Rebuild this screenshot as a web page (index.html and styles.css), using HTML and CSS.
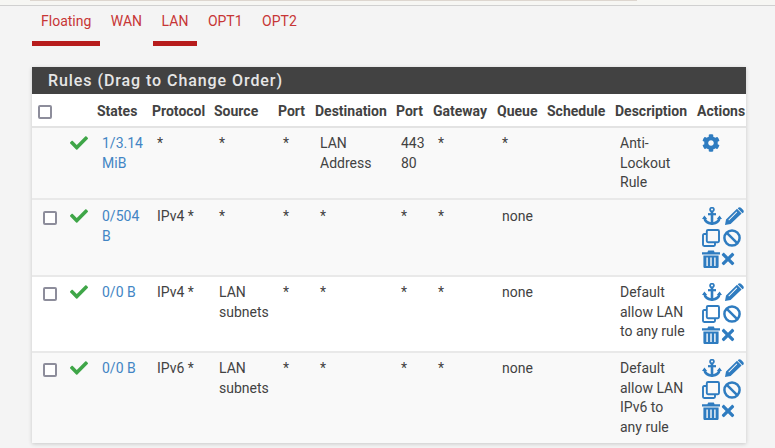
FILE: index.html
```html
<!DOCTYPE html>
<html lang="en">
<head>
<meta charset="utf-8">
<title>Firewall Rules</title>
<link rel="stylesheet" href="styles.css">
</head>
<body>
<svg class="defs" width="0" height="0" aria-hidden="true">
  <symbol id="i-check" viewBox="0 0 512 512"><path d="M173.9 439.4l-166.4-166.4c-10-10-10-26.2 0-36.2l36.2-36.2c10-10 26.2-10 36.2 0L192 312.7 432.1 72.6c10-10 26.2-10 36.2 0l36.2 36.2c10 10 10 26.2 0 36.2l-294.4 294.4c-10 10-26.2 10-36.2 0z"/></symbol>
  <symbol id="i-cog" viewBox="0 0 512 512"><path d="M487.4 315.7l-42.6-24.6c4.3-23.2 4.3-47 0-70.2l42.6-24.6c4.9-2.8 7.1-8.6 5.5-14-11.1-35.6-30-67.8-54.7-94.6-3.8-4.1-10-5.1-14.8-2.3L380.8 110c-17.9-15.4-38.5-27.3-60.8-35.1V25.8c0-5.6-3.9-10.5-9.4-11.7-36.7-8.2-74.3-7.8-109.2 0-5.5 1.2-9.4 6.1-9.4 11.7V75c-22.2 7.9-42.8 19.8-60.8 35.1L88.7 85.5c-4.9-2.8-11-1.9-14.8 2.3-24.7 26.7-43.6 58.9-54.7 94.6-1.7 5.4.6 11.2 5.5 14L67.3 221c-4.3 23.2-4.3 47 0 70.2l-42.6 24.6c-4.9 2.8-7.1 8.6-5.5 14 11.1 35.6 30 67.8 54.7 94.6 3.8 4.1 10 5.1 14.8 2.3l42.6-24.6c17.9 15.4 38.5 27.3 60.8 35.1v49.2c0 5.6 3.9 10.5 9.4 11.7 36.7 8.2 74.3 7.8 109.2 0 5.5-1.2 9.4-6.1 9.4-11.7v-49.2c22.2-7.9 42.8-19.8 60.8-35.1l42.6 24.6c4.9 2.8 11 1.9 14.8-2.3 24.7-26.7 43.6-58.9 54.7-94.6 1.5-5.5-.7-11.3-5.6-14.1zM256 336c-44.1 0-80-35.9-80-80s35.9-80 80-80 80 35.9 80 80-35.9 80-80 80z"/></symbol>
  <symbol id="i-anchor" viewBox="0 0 20 18"><g fill="none" stroke="currentColor"><circle cx="10" cy="2.6" r="1.9" stroke-width="1.8"/><path d="M10 4.5V16.5" stroke-width="2.6"/><path d="M6 7.2H14" stroke-width="2.2"/><path d="M2.4 10.5C2.8 14.2 6 16.2 10 16.8C14 16.2 17.2 14.2 17.6 10.5" stroke-width="2.5"/></g><path d="M0 12L2.4 8.4L5.2 12ZM14.8 12L17.6 8.4L20 12Z"/></symbol>
  <symbol id="i-pencil" viewBox="0 0 19 18"><path fill-rule="evenodd" d="M0 18L1 12.6L12 1.8L16.6 6.4L5.6 17ZM3.4 12.8L4 13.4L12.2 5.2L11.6 4.6ZM13.2.8C14 0 15.2 0 16 .7L18.2 2.9C19 3.7 19 4.9 18.2 5.7L17.5 6.3L12.8 1.6Z"/></symbol>
  <symbol id="i-clone" viewBox="0 0 18 18"><g fill="none" stroke="currentColor" stroke-width="1.9"><rect x="4.8" y="1" width="12.2" height="12.2" rx="1.2"/><path d="M4.8 5H2.2C1.5 5 1 5.5 1 6.2V15.8C1 16.5 1.5 17 2.2 17H11.8C12.5 17 13 16.5 13 15.8V13.2"/></g></symbol>
  <symbol id="i-ban" viewBox="0 0 18 18"><g fill="none" stroke="currentColor" stroke-width="2.5"><circle cx="9" cy="9" r="7.6"/><path d="M3.8 3.8L14.2 14.2"/></g></symbol>
  <symbol id="i-trash" viewBox="0 0 18 18"><path d="M0 2.2H5.4L6.2 .4H11.8L12.6 2.2H18V4.4H0ZM1.4 5.4H16.6V16.4C16.6 17.3 15.9 18 15 18H3C2.1 18 1.4 17.3 1.4 16.4ZM4.4 7.4V16H5.8V7.4ZM8.3 7.4V16H9.7V7.4ZM12.2 7.4V16H13.6V7.4Z" fill-rule="evenodd"/></symbol>
  <symbol id="i-times" viewBox="0 0 352 512"><path d="M242.7 256l100.1-100.1c12.3-12.3 12.3-32.2 0-44.5l-22.2-22.2c-12.3-12.3-32.2-12.3-44.5 0L176 189.3 75.9 89.2c-12.3-12.3-32.2-12.3-44.5 0L9.2 111.5c-12.3 12.3-12.3 32.2 0 44.5L109.3 256 9.2 356.1c-12.3 12.3-12.3 32.2 0 44.5l22.2 22.2c12.3 12.3 32.2 12.3 44.5 0L176 322.7l100.1 100.1c12.3 12.3 32.2 12.3 44.5 0l22.2-22.2c12.3-12.3 12.3-32.2 0-44.5L242.7 256z"/></symbol>
</svg>

<div class="topbar"><div class="topstrip"></div></div>

<nav class="tabs">
  <a class="tab active">Floating</a>
  <a class="tab">WAN</a>
  <a class="tab active">LAN</a>
  <a class="tab">OPT1</a>
  <a class="tab">OPT2</a>
</nav>

<section class="panel">
  <h2 class="panel-title">Rules (Drag to Change Order)</h2>
  <table class="rules">
    <thead>
      <tr>
        <th class="c-sel"><input type="checkbox" class="box box-head"></th>
        <th class="c-stat"></th>
        <th class="c-states">States</th>
        <th class="c-proto">Protocol</th>
        <th class="c-src">Source</th>
        <th class="c-port">Port</th>
        <th class="c-dest">Destination</th>
        <th class="c-port">Port</th>
        <th class="c-gw">Gateway</th>
        <th class="c-queue">Queue</th>
        <th class="c-sched">Schedule</th>
        <th class="c-desc">Description</th>
        <th class="c-act">Actions</th>
      </tr>
    </thead>
    <tbody>
      <tr class="row row-lock">
        <td></td>
        <td><svg class="ok"><use href="#i-check"/></svg></td>
        <td><a class="link">1/3.14 MiB</a></td>
        <td>*</td>
        <td>*</td>
        <td>*</td>
        <td>LAN Address</td>
        <td>443<br>80</td>
        <td>*</td>
        <td>*</td>
        <td></td>
        <td class="desc">Anti-Lockout Rule</td>
        <td><div class="acts"><svg class="ic cog"><use href="#i-cog"/></svg></div></td>
      </tr>
      <tr class="row row-a">
        <td><input type="checkbox" class="box"></td>
        <td><svg class="ok"><use href="#i-check"/></svg></td>
        <td><a class="link">0/504 B</a></td>
        <td>IPv4 *</td>
        <td>*</td>
        <td>*</td>
        <td>*</td>
        <td>*</td>
        <td>*</td>
        <td>none</td>
        <td></td>
        <td class="desc"></td>
        <td><div class="acts">
          <svg class="ic anchor"><use href="#i-anchor"/></svg><svg class="ic pencil"><use href="#i-pencil"/></svg>
          <svg class="ic clone"><use href="#i-clone"/></svg><svg class="ic ban"><use href="#i-ban"/></svg>
          <svg class="ic trash"><use href="#i-trash"/></svg><svg class="ic times"><use href="#i-times"/></svg>
        </div></td>
      </tr>
      <tr class="row row-b">
        <td><input type="checkbox" class="box"></td>
        <td><svg class="ok"><use href="#i-check"/></svg></td>
        <td><a class="link">0/0 B</a></td>
        <td>IPv4 *</td>
        <td>LAN subnets</td>
        <td>*</td>
        <td>*</td>
        <td>*</td>
        <td>*</td>
        <td>none</td>
        <td></td>
        <td class="desc">Default allow LAN to any rule</td>
        <td><div class="acts">
          <svg class="ic anchor"><use href="#i-anchor"/></svg><svg class="ic pencil"><use href="#i-pencil"/></svg>
          <svg class="ic clone"><use href="#i-clone"/></svg><svg class="ic ban"><use href="#i-ban"/></svg>
          <svg class="ic trash"><use href="#i-trash"/></svg><svg class="ic times"><use href="#i-times"/></svg>
        </div></td>
      </tr>
      <tr class="row row-c">
        <td><input type="checkbox" class="box"></td>
        <td><svg class="ok"><use href="#i-check"/></svg></td>
        <td><a class="link">0/0 B</a></td>
        <td>IPv6 *</td>
        <td>LAN subnets</td>
        <td>*</td>
        <td>*</td>
        <td>*</td>
        <td>*</td>
        <td>none</td>
        <td></td>
        <td class="desc">Default allow LAN IPv6 to any rule</td>
        <td><div class="acts">
          <svg class="ic anchor"><use href="#i-anchor"/></svg><svg class="ic pencil"><use href="#i-pencil"/></svg>
          <svg class="ic clone"><use href="#i-clone"/></svg><svg class="ic ban"><use href="#i-ban"/></svg>
          <svg class="ic trash"><use href="#i-trash"/></svg><svg class="ic times"><use href="#i-times"/></svg>
        </div></td>
      </tr>
    </tbody>
  </table>
</section>
</body>
</html>
```

FILE: styles.css
```css
* { box-sizing: border-box; }

html, body { height: 100%; }

body {
  margin: 0;
  background: #f4f4f4;
  font-family: Roboto, "Liberation Sans", sans-serif;
  font-size: 14px;
  line-height: 19.7px;
  color: #424242;
  overflow: hidden;
}

.defs { position: absolute; }

.topbar {
  height: 6px;
  background: #f6f6f3;
  border-bottom: 1px solid #d0d0d0;
}

.topstrip {
  width: 607px;
  height: 1px;
  margin-left: 30px;
  background: #ddd6cf;
}

.tabs {
  display: flex;
  gap: 2px;
  height: 40px;
  margin: 0 0 21px 32px;
}

.tab {
  padding: 6px 8.5px 0 9px;
  color: #c73636;
  border-bottom: 5px solid transparent;
}

.tab.active { border-bottom-color: #b71c1c; }

.panel {
  width: 714px;
  margin-left: 32px;
  background: #fff;
  box-shadow: 0 1px 4px rgba(0, 0, 0, .18);
}

.panel-title {
  margin: 0;
  height: 27px;
  padding: 0 16px;
  background: #424242;
  color: #e6e6e6;
  font-size: 16px;
  font-weight: 500;
  letter-spacing: .93px;
  line-height: 28px;
}

.rules {
  width: 714px;
  table-layout: fixed;
  border-collapse: collapse;
}

.rules th {
  height: 33px;
  padding: 4px 0 0;
  text-align: left;
  font-weight: 700;
  white-space: nowrap;
  border-bottom: 2px solid #e3e3e3;
}

.c-sel { width: 33px; }
.c-stat { width: 32px; }
.c-states { width: 55px; }
.c-proto { width: 62px; }
.c-src { width: 64px; }
.c-port { width: 37px; }
.c-dest { width: 81px; }
.c-gw { width: 64px; }
.c-queue { width: 50px; }
.c-sched { width: 68px; }
.c-desc { width: 82px; }
.c-act { width: 49px; }

.rules td {
  padding: 6px 5px 0;
  vertical-align: top;
  border-bottom: 2px solid #e9e9e9;
}

.rules td.desc { padding-right: 10px; }

.row-lock { height: 72px; background: #f9f9f9; }
.row-a { height: 77px; background: #f9f9f9; }
.row-b { height: 76px; background: #fff; }
.row-c { height: 91px; background: #f9f9f9; }

.rules .row-a td { padding-top: 7px; }

.rules .row-c td { border-bottom: 0; }

.link { color: #4285c4; }

.box {
  appearance: none;
  display: block;
  width: 14px;
  height: 14px;
  margin: 4px 0 0 6px;
  background: #fff;
  border: 2px solid #8d8d9b;
  border-radius: 2px;
}

.rules .box-head { width: 13.5px; margin: 0 0 0 6px; }

.ok {
  display: block;
  width: 18px;
  height: 18px;
  fill: #3fa648;
}

.acts {
  display: flex;
  flex-wrap: wrap;
  column-gap: 3px;
  row-gap: 3.5px;
  width: 44px;
  color: #2f7cc0;
}

.ic {
  display: block;
  fill: currentColor;
  height: 18px;
}

.cog { width: 18px; }
.anchor { width: 20px; }
.pencil { width: 19px; }
.clone { width: 18px; }
.ban { width: 18px; }
.trash { width: 18px; }
.times { width: 14px; margin-left: -2px; }
```
